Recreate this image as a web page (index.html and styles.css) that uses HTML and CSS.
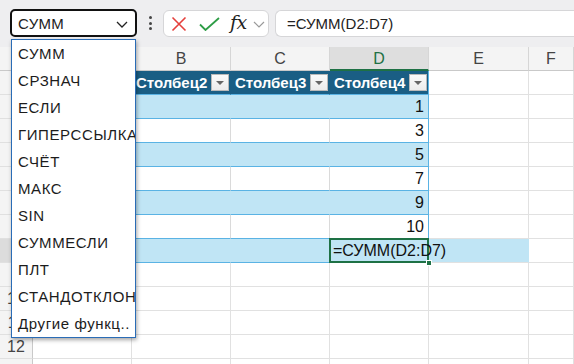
FILE: index.html
```html
<!DOCTYPE html>
<html lang="ru">
<head>
<meta charset="utf-8">
<title>Excel</title>
<link rel="stylesheet" href="styles.css">
</head>
<body>
<div class="app">
  <div class="toolbar">
    <div class="namebox">
      <span class="nb-text">СУММ</span>
      <svg class="nb-chev" width="12" height="7" viewBox="0 0 12 7"><path d="M1 1 L6 6 L11 1" fill="none" stroke="#222" stroke-width="1.3"/></svg>
    </div>
    <div class="dots"><span></span><span></span><span></span></div>
    <div class="fxbox">
      <svg class="ic-x" width="16" height="16" viewBox="0 0 16 16"><path d="M1.5 1.5 L14.5 14.5 M14.5 1.5 L1.5 14.5" stroke="#e5403c" stroke-width="1.6" fill="none"/></svg>
      <svg class="ic-ok" width="21" height="14" viewBox="0 0 21 14"><path d="M1 7.5 L6.5 13 L20 1" stroke="#2e9d46" stroke-width="1.8" fill="none"/></svg>
      <span class="fx">fx</span>
      <svg class="fx-chev" width="12" height="7" viewBox="0 0 12 7"><path d="M1 1 L6 6 L11 1" fill="none" stroke="#9a9a9a" stroke-width="1.2"/></svg>
    </div>
    <div class="formula">=СУММ(D2:D7)</div>
  </div>

  <div class="grid">
    <div class="ch corner"></div><div class="ch">A</div><div class="ch">B</div><div class="ch">C</div><div class="ch active">D</div><div class="ch">E</div><div class="ch">F</div>

    <div class="rh">1</div>
    <div class="c th"><span>Столбец1</span><i class="fb"></i></div>
    <div class="c th"><span>Столбец2</span><i class="fb"></i></div>
    <div class="c th"><span>Столбец3</span><i class="fb"></i></div>
    <div class="c th edge"><span>Столбец4</span><i class="fb"></i></div>
    <div class="c"></div><div class="c"></div>

    <div class="rh">2</div>
    <div class="c tb"></div><div class="c tb"></div><div class="c tb"></div><div class="c tb edge num">1</div>
    <div class="c"></div><div class="c"></div>

    <div class="rh">3</div>
    <div class="c tw"></div><div class="c tw"></div><div class="c tw"></div><div class="c tw edge num">3</div>
    <div class="c"></div><div class="c"></div>

    <div class="rh">4</div>
    <div class="c tb"></div><div class="c tb"></div><div class="c tb"></div><div class="c tb edge num">5</div>
    <div class="c"></div><div class="c"></div>

    <div class="rh">5</div>
    <div class="c tw"></div><div class="c tw"></div><div class="c tw"></div><div class="c tw edge num">7</div>
    <div class="c"></div><div class="c"></div>

    <div class="rh">6</div>
    <div class="c tb"></div><div class="c tb"></div><div class="c tb"></div><div class="c tb edge num">9</div>
    <div class="c"></div><div class="c"></div>

    <div class="rh">7</div>
    <div class="c tw"></div><div class="c tw"></div><div class="c tw"></div><div class="c tw edge num">10</div>
    <div class="c"></div><div class="c"></div>

    <div class="rh sel">8</div>
    <div class="c tb"></div><div class="c tb"></div><div class="c tb"></div>
    <div class="c tb edge cur"><span class="ftext">=СУММ(D2:D7)</span><i class="handle"></i></div>
    <div class="c fillx"></div><div class="c"></div>

    <div class="rh">9</div><div class="c"></div><div class="c"></div><div class="c"></div><div class="c"></div><div class="c"></div><div class="c"></div>
    <div class="rh">10</div><div class="c"></div><div class="c"></div><div class="c"></div><div class="c"></div><div class="c"></div><div class="c"></div>
    <div class="rh">11</div><div class="c"></div><div class="c"></div><div class="c"></div><div class="c"></div><div class="c"></div><div class="c"></div>
    <div class="rh">12</div><div class="c"></div><div class="c"></div><div class="c"></div><div class="c"></div><div class="c"></div><div class="c"></div>
    <div class="rh"></div><div class="c"></div><div class="c"></div><div class="c"></div><div class="c"></div><div class="c"></div><div class="c"></div>
  </div>

  <ul class="dropdown">
    <li>СУММ</li>
    <li>СРЗНАЧ</li>
    <li>ЕСЛИ</li>
    <li>ГИПЕРССЫЛКА</li>
    <li>СЧЁТ</li>
    <li>МАКС</li>
    <li>SIN</li>
    <li>СУММЕСЛИ</li>
    <li>ПЛТ</li>
    <li>СТАНДОТКЛОН</li>
    <li>Другие функц..</li>
  </ul>
</div>
</body>
</html>
```

FILE: styles.css
```css
* { box-sizing: border-box; }
html, body { margin: 0; padding: 0; }
body {
  font-family: "Liberation Sans", Arial, sans-serif;
  font-size: 15px;
  color: #222;
  background: #fff;
  width: 574px;
  height: 364px;
  overflow: hidden;
}
.app { position: relative; width: 574px; height: 364px; overflow: hidden; }

.toolbar {
  height: 47px;
  background: #eeeef0;
  display: flex;
  align-items: flex-start;
  padding: 9px 0 0 10px;
}
.namebox {
  width: 127px;
  height: 28px;
  background: #fff;
  border: 2px solid #111;
  border-radius: 5px;
  display: flex;
  align-items: center;
  justify-content: space-between;
  padding: 0 7px 0 6px;
}
.nb-text { font-size: 15px; color: #222; letter-spacing: 0.3px; }
.nb-chev { margin-top: 2px; }

.dots {
  width: 26px;
  height: 28px;
  display: flex;
  flex-direction: column;
  align-items: center;
  justify-content: center;
  gap: 2.5px;
}
.dots span { width: 3px; height: 3px; background: #444; border-radius: 50%; }

.fxbox {
  margin-top: 1px;
  width: 106px;
  height: 27px;
  background: #fff;
  border: 1px solid #d6d6d8;
  border-radius: 6px;
  display: flex;
  align-items: center;
  padding-left: 7px;
}
.ic-x { margin-right: 12px; }
.ic-ok { margin-right: 10px; }
.fx {
  font-family: "DejaVu Serif", "Liberation Serif", serif;
  font-style: italic;
  font-size: 19px;
  color: #222;
  margin-top: -3px;
  margin-right: 6px;
  letter-spacing: -0.5px;
}
.fx-chev { margin-top: 2px; }

.formula {
  margin-top: 1px;
  margin-left: 6px;
  flex: 1;
  height: 27px;
  background: #fff;
  border: 1px solid #d6d6d8;
  border-right: none;
  border-radius: 6px 0 0 6px;
  padding-left: 11px;
  line-height: 25px;
  font-size: 15px;
  color: #222;
}

.grid {
  display: grid;
  grid-template-columns: 33px 99px 99px 99px 99px 100px 1fr;
  grid-template-rows: 24px repeat(13, 24px);
}
.ch {
  background: #f4f4f4;
  border-right: 1px solid #d6d6d6;
  border-bottom: 1px solid #c9c9c9;
  text-align: center;
  line-height: 23px;
  font-size: 16px;
  color: #444;
}
.ch.active {
  background: #dedede;
  color: #1e7145;
  border-bottom: 2px solid #1e7145;
}
.rh {
  background: #f4f4f4;
  border-right: 1px solid #c9c9c9;
  border-bottom: 1px solid #e0e0e0;
  text-align: center;
  line-height: 23px;
  font-size: 16px;
  color: #444;
}
.rh.sel { background: #dcdcdc; }

.c {
  position: relative;
  border-right: 1px solid #e1e1e1;
  border-bottom: 1px solid #e1e1e1;
  line-height: 23px;
  font-size: 15px;
  color: #111;
  white-space: nowrap;
}
.th {
  background: #1a5e84;
  border-right-color: #1a5e84;
  border-bottom-color: #5ab3e4;
  color: #fff;
  font-weight: bold;
  display: flex;
  align-items: center;
  justify-content: space-between;
  padding-left: 4px;
  overflow: hidden;
}
.fb {
  flex: none;
  width: 18px;
  height: 17px;
  margin-right: 1px;
  background: linear-gradient(#fafafa, #ececec);
  border: 1px solid #b9b9b9;
  position: relative;
}
.fb::after {
  content: "";
  position: absolute;
  left: 4px;
  top: 6px;
  border-left: 4px solid transparent;
  border-right: 4px solid transparent;
  border-top: 4px solid #666;
}
.tb {
  background: #c0e5f5;
  border-right-color: #c0e5f5;
  border-bottom-color: #5ab3e4;
}
.tw {
  border-bottom-color: #5ab3e4;
  border-right-color: #dadada;
}
.edge { border-right-color: #5ab3e4; }
.num { text-align: right; padding-right: 4px; font-size: 16px; }

.cur { overflow: visible; z-index: 2; }
.cur::before {
  content: "";
  position: absolute;
  left: -1px; top: -1px; right: -1px; bottom: -1px;
  border: 2px solid #1e7145;
  pointer-events: none;
}
.ftext {
  position: relative;
  padding-left: 3px;
  font-size: 16px;
  color: #111;
}
.handle {
  position: absolute;
  right: -4px;
  bottom: -4px;
  width: 6px;
  height: 6px;
  background: #1e7145;
  border: 1px solid #fff;
  z-index: 3;
}
.fillx { background: #c0e5f5; border-right-color: #c0e5f5; }

.dropdown {
  position: absolute;
  left: 11px;
  top: 39px;
  width: 125px;
  margin: 0;
  padding: 0;
  list-style: none;
  background: #fff;
  border: 1px solid #2a6cb6;
  box-shadow: 1px 2px 4px rgba(0,0,0,0.35);
  overflow: hidden;
  z-index: 10;
}
.dropdown li {
  height: 27px;
  line-height: 27px;
  padding-left: 6px;
  font-size: 15px;
  letter-spacing: 0.6px;
  color: #1c1c1c;
  white-space: nowrap;
  overflow: hidden;
}
```
